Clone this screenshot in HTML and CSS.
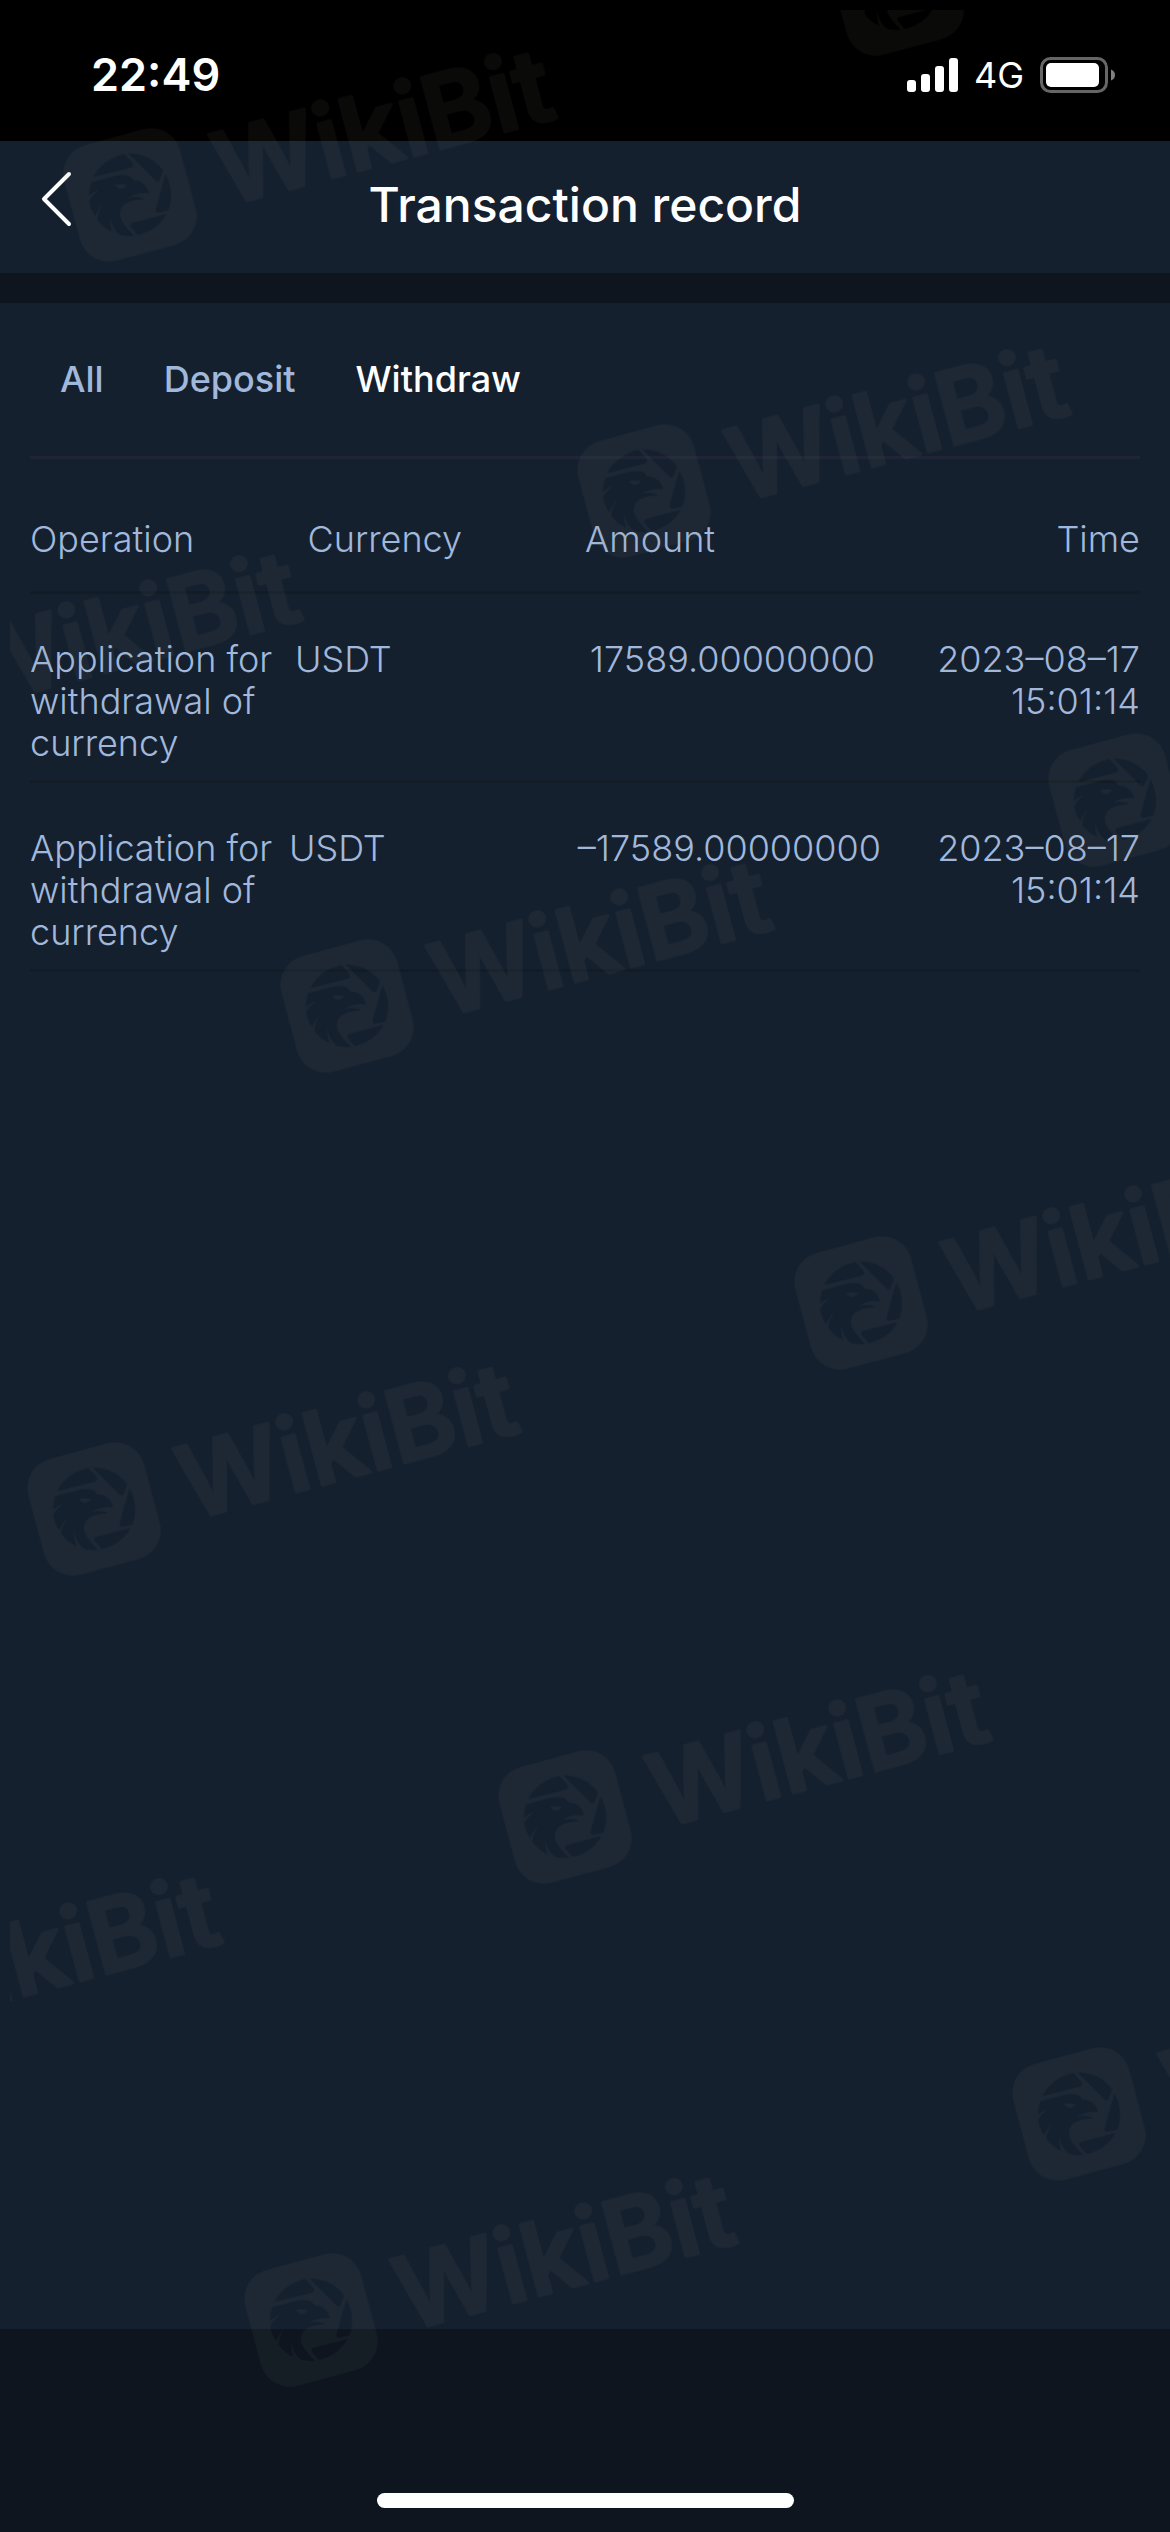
FILE: index.html
```html
<!DOCTYPE html>
<html lang="en">
<head>
<meta charset="UTF-8" />
<meta name="viewport" content="width=device-width, initial-scale=1" />
<title>Transaction record</title>
<link rel="stylesheet" href="styles.css">
</head>
<body>

<!-- STATUS BAR -->
<div class="status-bar">
  <span class="status-time">22:49</span>
  <div class="status-icons">
    <svg class="signal" width="51" height="34" viewBox="0 0 51 34" aria-hidden="true">
      <rect x="0" y="22" width="9" height="12" rx="3" />
      <rect x="14" y="16" width="9" height="18" rx="3" />
      <rect x="28" y="8" width="9" height="26" rx="3" />
      <rect x="42" y="0" width="9" height="34" rx="3" />
    </svg>
    <span class="network">4G</span>
    <svg class="battery" width="75" height="36" viewBox="0 0 75 36" aria-hidden="true">
      <rect class="battery-case" x="1.5" y="1.5" width="65" height="33" rx="9" />
      <rect x="6" y="6" width="53" height="24" rx="5" />
      <path class="battery-tip" d="M71 12.500 Q75 14 75 18 Q75 22 71 23.500 Z" />
    </svg>
  </div>
</div>

<!-- HEADER -->
<header class="header">
  <a href="#" class="back" aria-label="Back">
    <svg width="34" height="56" viewBox="0 0 34 56" aria-hidden="true">
      <path d="M29 3 L4 28 L29 53" />
    </svg>
  </a>
  <h1>Transaction record</h1>
</header>

<!-- RECORDS -->
<main class="panel">
  <nav class="tabs" aria-label="Record type">
    <button type="button">All</button>
    <button type="button">Deposit</button>
    <button type="button" class="active">Withdraw</button>
  </nav>

  <table class="records">
    <thead>
      <tr>
        <th>Operation</th>
        <th>Currency</th>
        <th>Amount</th>
        <th class="time">Time</th>
      </tr>
    </thead>
    <tbody>
      <tr>
        <td>Application for withdrawal of currency</td>
        <td class="currency">USDT</td>
        <td class="amount">17589.00000000</td>
        <td class="time">2023–08–17 15:01:14</td>
      </tr>
      <tr>
        <td>Application for withdrawal of currency</td>
        <td class="currency">USDT</td>
        <td class="amount">–17589.00000000</td>
        <td class="time">2023–08–17 15:01:14</td>
      </tr>
    </tbody>
  </table>
</main>

<footer class="bottom-bar">
  <div class="home-indicator"></div>
</footer>

<!-- WATERMARK -->
<svg class="watermark" aria-hidden="true">
  <defs>
    <mask id="eagle" maskUnits="userSpaceOnUse" x="0" y="200" width="480" height="460">
      <rect x="0" y="200" width="480" height="460" fill="#fff" />
      <path d="M134 375 Q162 322 227 306 L251 333 Q256 341 248 346 Z" />
      <path d="M240 304 Q305 305 343 355 L333 383 Q329 391 321 386 Z" />
      <path d="M350 367 Q379 420 359 475 L328 482 Q320 482 321 472 Z" />
      <path d="M354 486 Q324 537 267 549 L246 524 Q244 514 251 513 Z" />
      <path d="M128 391 L200 372 Q245 363 253 385 Q292 386 301 424 Q270 418 235 437 Q275 430 286 442 Q215 443 213 485 Q213 510 256 552 Q232 553 215 549 Q190 530 184 493 Q183 520 191 540 Q160 525 146 502 Q148 480 165 453 Q148 470 140 492 Q123 470 122 446 Q135 425 152 414 Q135 418 121 432 Q120 410 128 391 Z" />
      <path d="M199 399 Q217 394 235 399 Q228 411 217 411 Q205 410 199 399 Z" fill="#fff" />
    </mask>
    <g id="mark">
      <g transform="scale(.3333) translate(-244 -429)">
        <g mask="url(#eagle)">
          <rect x="64" y="249" width="360" height="360" rx="90" transform="rotate(-15 244 429)" />
        </g>
      </g>
      <text x="89" y="36" transform="rotate(-15)">WikiBit</text>
    </g>
  </defs>
  <use href="#mark" x="887" y="-21" />
  <use href="#mark" x="120" y="185" />
  <use href="#mark" x="634" y="481" />
  <use href="#mark" x="-134" y="687" />
  <use href="#mark" x="1105" y="790" />
  <use href="#mark" x="337" y="996" />
  <use href="#mark" x="851" y="1293" />
  <use href="#mark" x="84" y="1499" />
  <use href="#mark" x="555" y="1807" />
  <use href="#mark" x="-214" y="2010" />
  <use href="#mark" x="1069" y="2104" />
  <use href="#mark" x="301" y="2310" />
</svg>

</body>
</html>
```

FILE: styles.css
```css
/* Reset */
*, *::before, *::after {
  box-sizing: border-box;
}
body, h1, button {
  margin: 0;
  padding: 0;
  font-family: Inter, "Liberation Sans", sans-serif;
}

/* Variables */
:root {
  --bg: #0e151f;
  --panel: #15202f;
  --text: #a1b8db;
  --line: #111c26;
  --line-tabs: #1f2536;
  --mark: #808878;
}

body {
  position: relative;
  display: flex;
  flex-direction: column;
  min-height: 100vh;
  background: var(--bg);
  color: var(--text);
  font-size: 36px;
  line-height: 42px;
}

/* Status bar */
.status-bar {
  display: flex;
  align-items: center;
  justify-content: space-between;
  height: 141px;
  padding: 8px 55px 0 91px;
  background: #000;
  color: #fff;
}
.status-time {
  font-size: 45px;
  font-weight: 600;
}
.status-icons {
  display: flex;
  align-items: center;
  gap: 16px;
  fill: #fff;
}
.network {
  font-size: 36px;
  font-weight: 400;
}
.battery-case {
  fill: none;
  stroke: #666;
  stroke-width: 3;
}
.battery-tip {
  fill: #808080;
}

/* Header */
.header {
  display: grid;
  grid-template-columns: 100px 1fr 100px;
  align-items: center;
  height: 132px;
  padding-bottom: 4px;
  background: var(--panel);
  color: #fff;
}
.header h1 {
  font-size: 48px;
  font-weight: 500;
  text-align: center;
}
.back {
  padding: 0 0 12px 40px;
  line-height: 0;
}
.back path {
  fill: none;
  stroke: #fff;
  stroke-width: 4;
  stroke-linecap: round;
  stroke-linejoin: round;
}

/* Records */
.panel {
  flex: 1;
  margin-top: 30px;
  padding: 0 30px;
  background: var(--panel);
}
.tabs {
  display: flex;
  gap: 60px;
  padding: 55px 30px 56px;
  border-bottom: 3px solid var(--line-tabs);
}
.tabs button {
  border: none;
  background: none;
  color: var(--text);
  font-size: 36px;
  font-weight: 500;
  line-height: 42px;
  cursor: pointer;
}
.tabs .active {
  color: #fff;
}
.records, .records thead, .records tbody {
  display: block;
}
.records tr {
  display: flex;
  border-bottom: 3px solid var(--line);
}
.records thead tr {
  padding: 59px 0 31px;
}
.records tbody tr {
  padding: 44px 0 16px;
}
.records th, .records td {
  flex: 1 1 0;
  padding: 0;
  font-weight: 300;
  text-align: left;
}
.records .currency {
  padding-right: 30px;
}
.records .amount {
  flex: none;
}
.records .time {
  text-align: right;
}

/* Bottom */
.bottom-bar {
  display: flex;
  align-items: flex-end;
  justify-content: center;
  height: 203px;
  padding-bottom: 24px;
}
.home-indicator {
  width: 417px;
  height: 15px;
  border-radius: 8px;
  background: #fff;
}

/* Watermark */
.watermark {
  position: absolute;
  top: 10px;
  left: 10px;
  width: calc(100% - 10px);
  height: calc(100% - 10px);
  overflow: hidden;
  pointer-events: none;
}
.watermark use {
  fill: var(--mark);
  stroke: var(--mark);
  opacity: 0.08;
}
.watermark rect, .watermark path {
  stroke: none;
}
.watermark mask path:not([fill]) {
  fill: #000;
}
.watermark text {
  font-size: 102px;
  font-weight: 600;
  stroke-width: 3;
  stroke-linejoin: round;
}
```
